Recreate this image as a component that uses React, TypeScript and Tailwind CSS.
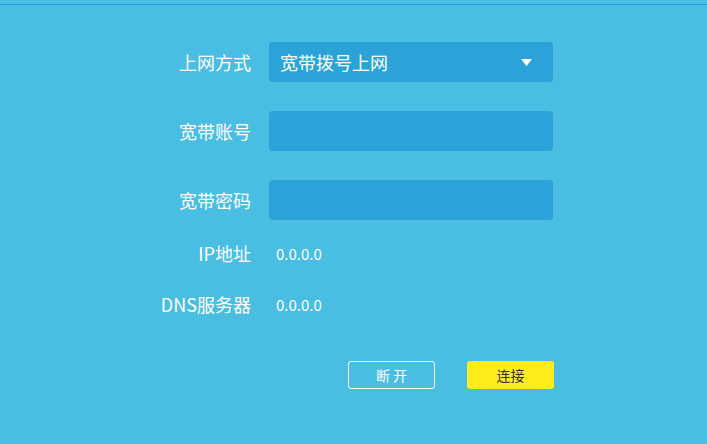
const font = { fontFamily: '"Noto Sans CJK SC", "Noto Sans", sans-serif' }

const Field = ({ label, children }: { label: string, children?: React.ReactNode }) => {
    return (
        <div className="flex items-center h-[40px]">
            <div className="w-[251px] text-right text-white text-[18px] leading-none">{label}</div>
            <div className="ml-[18px] w-[284px] h-[40px] bg-[#2ba3d8] rounded-[4px] flex items-center">
                {children}
            </div>
        </div>
    )
}

const Info = ({ label, value }: { label: string, value: string }) => {
    return (
        <div className="flex items-center h-[24px]">
            <div className="w-[251px] text-right text-white text-[18px] leading-none">{label}</div>
            <div className="ml-[25px] text-white text-[15px] leading-none">{value}</div>
        </div>
    )
}

const App = () => {
    return (
        <div style={font} className="w-[707px] h-[444px] bg-[#4abde2] overflow-hidden">
            <div className="h-[4px]"></div>
            <div className="h-[1px] bg-[#2a9edb]"></div>

            <div className="pt-[37px]">
                <Field label="上网方式">
                    <div className="flex-1 pl-[11px] text-white text-[18px] leading-none">宽带拨号上网</div>
                    <svg width="11" height="7" viewBox="0 0 11 7" className="mr-[21px]">
                        <polygon points="0,0 11,0 5.5,7" fill="#ffffff" />
                    </svg>
                </Field>
                <div className="h-[29px]"></div>
                <Field label="宽带账号" />
                <div className="h-[29px]"></div>
                <Field label="宽带密码" />

                <div className="h-[21px]"></div>
                <Info label="IP地址" value="0.0.0.0" />
                <div className="h-[27px]"></div>
                <Info label="DNS服务器" value="0.0.0.0" />

                <div className="flex pt-[45px] pl-[348px] gap-[32px]">
                    <button className="w-[87px] h-[28px] border border-white rounded-[3px] text-white text-[14px] leading-none">断 开</button>
                    <button className="w-[87px] h-[28px] bg-[#ffec1c] rounded-[3px] text-[#333333] text-[14px] leading-none">连接</button>
                </div>
            </div>
        </div>
    )
}

export default App
